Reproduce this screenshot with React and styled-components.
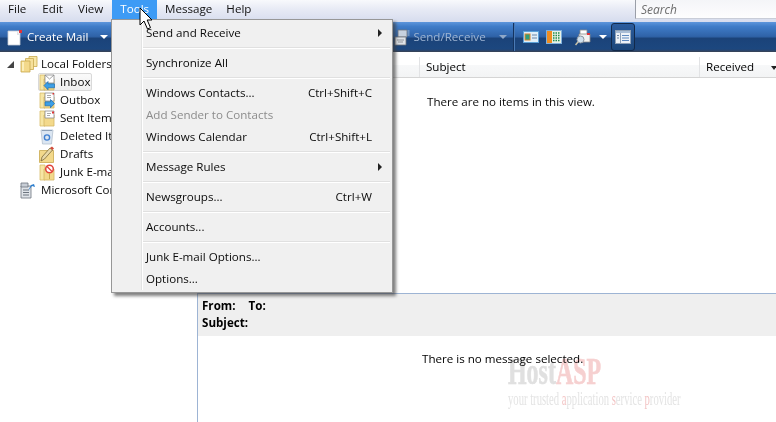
import React from 'react';
import styled, { createGlobalStyle } from 'styled-components';

const Global = createGlobalStyle`
  html, body { margin: 0; padding: 0; background: #fff; overflow: hidden; }
  * { box-sizing: border-box; }
`;
const FONT = `"Open Sans", "Noto Sans", "Liberation Sans", sans-serif`;

const Window = styled.div`
  position: relative; width: 776px; height: 422px; overflow: hidden; background: #fff;
  display: flex; flex-direction: column;
  font-family: ${FONT}; font-size: 11.6px; color: #000;
`;
const MenuBar = styled.div`
  height: 22px; flex: none; display: flex; align-items: flex-start;
  background: linear-gradient(#f8f9fc 0%, #e8ebf5 40%, #d6dcee 100%);
`;
const MenuItem = styled.div`
  height: 19px; line-height: 18px; padding: 0 8px; flex: none;
  margin-right: ${p => p.$mr || 0}px;
  background: ${p => (p.$active ? '#3d9bf5' : 'transparent')};
  color: ${p => (p.$active ? '#fff' : '#111')};
`;
const Search = styled.div`
  margin-left: auto; width: 141px; height: 19px; background: linear-gradient(#f4f5f8, #fdfdfe);
  border-left: 1px solid #9a9ea8; border-bottom: 1px solid #c9cdd8;
  font-style: italic; color: #6d6d6d; padding-left: 5px; line-height: 19px; font-size: 12px;
`;
const Toolbar = styled.div`
  height: 30px; flex: none; display: flex; align-items: center; padding-left: 7px; color: #fff;
  background: linear-gradient(#5d95dc 0%, #3f7cc8 15%, #2f63a8 48%, #1b4379 55%, #1c477f 90%, #2c4468 96%, #3c4452 100%);
`;
const ToolLabel = styled.span`
  color: ${p => (p.$dim ? '#9db4d2' : '#fff')}; margin-left: ${p => p.$ml}px; padding-bottom: 2px;
`;
const Caret = styled.span`
  width: 0; height: 0; border-left: 4px solid transparent; border-right: 4px solid transparent;
  border-top: 4px solid ${p => (p.$dim ? '#8fa8c8' : '#fff')}; margin-left: ${p => p.$ml}px; flex: none;
`;
const ToolDivider = styled.span`
  width: 1px; height: 28px; background: #14335f; box-shadow: 1px 0 0 #4a7ab5; margin: 0 9px 0 6px;
  flex: none;
`;
const ToolGap = styled.span`width: ${p => p.$w}px; flex: none;`;
const ToolIcon = styled.span`display: flex; margin-left: ${p => p.$ml || 0}px; flex: none;`;
const ToggleButton = styled.span`
  width: 24px; height: 28px; margin-left: 4px; border: 1px solid #12294a; border-radius: 3px; flex: none;
  background: linear-gradient(#2b5c9e, #1c4679); display: flex; align-items: center; justify-content: center;
`;
const Body = styled.div`flex: 1; display: flex; min-height: 0;`;
const Sidebar = styled.div`
  width: 197px; flex: none; padding-top: 3px; display: flex; flex-direction: column;
`;
const TreeRow = styled.div`
  height: 18px; display: flex; align-items: center; flex: none;
  padding-left: ${p => p.$indent}px; white-space: nowrap; color: #0a0a0a;
`;
const TreeLabel = styled.span`
  padding-bottom: 2px; margin-left: ${p => p.$ml || 0}px;
`;
const IconSlot = styled.span`
  width: 16px; margin-right: 5px; display: flex; justify-content: center; flex: none;
`;
const Selected = styled.div`
  display: flex; align-items: center; height: 18px; width: 54px; margin-left: -1px;
  border: 1px solid #d9d9d9; border-radius: 2px; background: linear-gradient(#fafafa, #efefef);
`;
const Expander = styled.span`
  width: 0; height: 0; border-left: 7px solid transparent; border-bottom: 7px solid #444; flex: none;
  margin-right: 6px;
`;
const Main = styled.div`flex: 1; display: flex; flex-direction: column; min-width: 0;`;
const ListPane = styled.div`height: 241px; flex: none; padding-top: 5px; display: flex; flex-direction: column;`;
const ColumnHeader = styled.div`
  height: 21px; flex: none; display: flex; border-bottom: 1px solid #d5d5d5;
  background: linear-gradient(#fff 0%, #fff 40%, #f7f8f9 41%, #f3f4f5 100%);
`;
const Column = styled.div`
  width: ${p => p.$w}px; flex: ${p => (p.$w ? 'none' : 1)}; padding-left: ${p => p.$pl || 0}px;
  border-right: ${p => (p.$last ? 'none' : '1px solid #e2e3e5')}; line-height: 20px;
  display: flex; align-items: center; justify-content: ${p => (p.$last ? 'space-between' : 'flex-start')};
`;
const SortCaret = styled.span`
  width: 0; height: 0; border-left: 3px solid transparent; border-right: 3px solid transparent;
  border-top: 4px solid #222; flex: none; margin-right: -1px; margin-top: 1px;
`;
const EmptyNote = styled.div`
  padding: 15px 0 0 230px; line-height: 17px; color: #0a0a0a;
`;
const Preview = styled.div`
  flex: 1; border-top: 1px solid #9db4d4; border-left: 1px solid #9db4d4; display: flex; flex-direction: column;
`;
const PreviewHeader = styled.div`
  height: 42px; flex: none; background: #efefef; padding: 3px 0 0 4px; font-weight: 700; line-height: 17px;
`;
const HeaderLine = styled.div`display: flex; gap: 13px;`;
const PreviewNote = styled.div`padding: 14px 0 0 224px; line-height: 17px;`;

const Dropdown = styled.div`
  position: absolute; left: 111px; top: 19px; width: 282px; height: 274px;
  background: #f0f0f0; border: 1px solid #979797; padding: 2px 2px 2px 30px;
  box-shadow: 3px 3px 3px rgba(60,60,60,.65); z-index: 3;
  &::before { content: ''; position: absolute; left: 29px; top: 2px; bottom: 2px; width: 1px; background: #e2e3e3; box-shadow: 1px 0 0 #fff; }
`;
const DropItem = styled.div`
  height: 22px; display: flex; align-items: center; justify-content: space-between;
  padding: 0 18px 2px 4px; color: ${p => (p.$off ? '#8c8c8c' : '#0a0a0a')}; position: relative;
`;
const Arrow = styled.span`
  position: absolute; right: 8px; top: 7px; width: 0; height: 0;
  border-top: 4px solid transparent; border-bottom: 4px solid transparent; border-left: 4px solid #222;
`;
const Sep = styled.div`
  height: 8px; display: flex; align-items: center;
  &::after { content: ''; display: block; width: 100%; height: 2px; background: linear-gradient(#e0e0e0 50%, #fff 50%); }
`;
const Watermark = styled.div`
  position: absolute; left: 508px; top: 353px; z-index: 1; pointer-events: none; user-select: none;
  font-family: "Liberation Serif", serif; color: #e0e0e0; width: 180px; mix-blend-mode: multiply;
`;
const WmTitle = styled.div`
  font-size: 38px; line-height: 36px; font-weight: 700; transform: scaleX(.63); transform-origin: left; white-space: nowrap;
  -webkit-text-stroke: .6px currentColor;
  span { color: #f6d0d0; }
`;
const WmTag = styled.div`
  font-size: 19px; line-height: 20px; transform: scaleX(.56); transform-origin: left; white-space: nowrap; color: #e4e4e4;
  span { color: #f3c6c6; }
`;
const Cursor = styled.svg`position: absolute; left: 139px; top: 7px; z-index: 5;`;

const Folder = ({ children }) => (
  <svg width="16" height="17" viewBox="0 0 16 17" style={{ flex: 'none' }}>
    <path d="M1 1h5v15H1z" fill="#f7e6a4" stroke="#d9bd6a" strokeWidth=".8" />
    <path d="M5 5h10v11H5z" fill="#f3d98b" stroke="#d3b562" strokeWidth=".8" />
    {children}
  </svg>
);
const LocalFolders = () => (
  <svg width="18" height="17" viewBox="0 0 18 17" style={{ flex: 'none' }}>
    <path d="M9 0.500h8v10H9z" fill="#f8e7a6" stroke="#c9a94f" strokeWidth=".8" />
    <path d="M5.500 2.500h8v11h-8z" fill="#f6e09a" stroke="#c9a94f" strokeWidth=".8" />
    <path d="M1 5h9v11H1z" fill="#f3d98b" stroke="#c9a94f" strokeWidth=".8" />
    <path d="M2 6v9h2V6z" fill="#fbeeb9" />
  </svg>
);
const Inbox = () => (
  <Folder>
    <path d="M6 1h9v8H6z" fill="#fff" stroke="#8a8a8a" strokeWidth=".8" />
    <path d="M6 1l4.500 4L15 1" fill="none" stroke="#8a8a8a" strokeWidth=".8" />
    <path d="M5 11.500l4-4v2.300h6.500v4H9v2z" fill="#3c9fe6" stroke="#1d6ab0" strokeWidth=".7" />
  </Folder>
);
const Outbox = () => (
  <Folder>
    <path d="M6 1h9v8H6z" fill="#fff" stroke="#8a8a8a" strokeWidth=".8" />
    <path d="M8 3.500h4M8 5.500h4" stroke="#aaa" />
    <rect x="13.500" y="1" width="1.500" height="1.500" fill="#d33" />
    <path d="M15.500 11.500l-4-4v2.300H6v4h5.500v2z" fill="#3c9fe6" stroke="#1d6ab0" strokeWidth=".7" />
  </Folder>
);
const Sent = () => (
  <Folder>
    <path d="M6 1h9v7H6z" fill="#fff" stroke="#8a8a8a" strokeWidth=".8" />
    <path d="M8 3.500h4M8 5.500h3" stroke="#aaa" />
    <rect x="13" y="1.500" width="2" height="2" fill="#d33" />
  </Folder>
);
const Deleted = () => (
  <svg width="14" height="17" viewBox="0 0 14 17" style={{ flex: 'none' }}>
    <path d="M1 2h12l-1.500 14h-9z" fill="#dbe6f2" stroke="#b4c0ce" strokeWidth=".8" />
    <path d="M2 2.500h10" stroke="#8da0b6" />
    <circle cx="7" cy="9.500" r="2.600" fill="none" stroke="#3f7fd0" strokeWidth="1.400" />
  </svg>
);
const Drafts = () => (
  <svg width="16" height="17" viewBox="0 0 16 17" style={{ flex: 'none' }}>
    <path d="M.5 4.500h14v12H.5z" fill="#f3d98b" stroke="#c9a94f" strokeWidth=".8" />
    <path d="M2 15l1-4 8-9 2.500 2-8 9z" fill="#e8d9a8" stroke="#6f5a2c" strokeWidth=".7" />
    <path d="M11 2l2-1.500 2 2-1.500 1.500z" fill="#d24a3a" />
  </svg>
);
const Junk = () => (
  <Folder>
    <circle cx="10.500" cy="5" r="3.800" fill="#fff" stroke="#e0443a" strokeWidth="1.500" />
    <path d="M8 2.500l5 5" stroke="#e0443a" strokeWidth="1.300" />
    <path d="M10.500 9v6" stroke="#c9a94f" />
  </Folder>
);
const Community = () => (
  <svg width="16" height="17" viewBox="0 0 16 17" style={{ flex: 'none' }}>
    <path d="M1 4h10v12H1z" fill="#dfe3e8" stroke="#6d757f" strokeWidth=".8" />
    <path d="M1 1h7v4H1z" fill="#c8ced6" stroke="#6d757f" strokeWidth=".8" />
    <path d="M3 8h6M3 10.500h6M3 13h6" stroke="#6d757f" />
    <path d="M8 9l4-5 3 1-1-3-3 1z" fill="#2c7fd0" />
  </svg>
);
const CreateIcon = () => (
  <svg width="16" height="17" viewBox="0 0 16 17" style={{ flex: 'none' }}>
    <path d="M1 2h9l3 0v14H1z" fill="#fff" stroke="#c5ccd6" strokeWidth=".8" />
    <path d="M10 2v4h3" fill="#dfe3e8" />
    <rect x="12" y="1" width="3" height="3" fill="#e0333a" />
  </svg>
);
const SendIcon = () => (
  <svg width="16" height="17" viewBox="0 0 16 17" style={{ flex: 'none' }} opacity=".9">
    <path d="M4 1h9v7H4z" fill="#d8dde4" stroke="#777" strokeWidth=".8" />
    <path d="M1 8h11v8H1z" fill="#f4f4f4" stroke="#777" strokeWidth=".8" />
    <path d="M3 11h7M4 13h5" stroke="#888" strokeWidth=".8" />
    <path d="M13.500 2h2M13.500 4h2M13.500 6h2" stroke="#b8c4d4" />
  </svg>
);
const ContactsIcon = () => (
  <svg width="16" height="12" viewBox="0 0 16 12">
    <rect x=".5" y=".5" width="15" height="11" fill="#dfeef9" stroke="#5aa0d8" />
    <rect x="2" y="3" width="5" height="6" fill="#2f9e7a" stroke="#d9822b" />
    <path d="M9 4h5M9 7h5" stroke="#6c86a8" />
  </svg>
);
const CalendarIcon = () => (
  <svg width="16" height="14" viewBox="0 0 16 14">
    <rect x=".5" y=".5" width="15" height="13" fill="#e8f2e6" stroke="#7fb0dc" />
    <rect x="1" y="1" width="5" height="12" fill="#ef8c20" />
    <path d="M7 3h7M7 5.500h7M7 8h7M7 10.500h7" stroke="#1f8a4c" strokeDasharray="1.500 1" strokeWidth="1.500" />
  </svg>
);
const FindIcon = () => (
  <svg width="16" height="17" viewBox="0 0 16 17">
    <path d="M5 1h7v5H5z" fill="#fff" stroke="#8a8a8a" strokeWidth=".8" />
    <path d="M4 5h11v8H4z" fill="#f2f2f2" stroke="#8a8a8a" strokeWidth=".8" />
    <rect x="12" y="4" width="3" height="2" fill="#e0333a" />
    <circle cx="5.500" cy="10.500" r="3.500" fill="#cfe0ee" stroke="#8a94a0" />
    <path d="M3 13l-2.500 3" stroke="#c9c2a8" strokeWidth="1.500" />
  </svg>
);
const LayoutIcon = () => (
  <svg width="16" height="14" viewBox="0 0 16 14">
    <rect x=".5" y=".5" width="15" height="13" fill="#eef2f8" stroke="#8ea0b6" />
    <rect x="1" y="1" width="14" height="2" fill="#a9bdd6" />
    <path d="M5.500 3v10" stroke="#8ea0b6" />
    <path d="M7 5.500h7M7 8h7M7 10.500h7" stroke="#5f8ac0" />
    <path d="M2 5.500h2M2 8h2" stroke="#6f87a6" />
  </svg>
);

const tree = [
  { label: 'Inbox', Icon: Inbox, sel: true },
  { label: 'Outbox', Icon: Outbox },
  { label: 'Sent Items', Icon: Sent },
  { label: 'Deleted Items', Icon: Deleted },
  { label: 'Drafts', Icon: Drafts },
  { label: 'Junk E-mail', Icon: Junk },
];

const menu = [
  [{ t: 'Send and Receive', sub: true }],
  [{ t: 'Synchronize All' }],
  [{ t: 'Windows Contacts...', k: 'Ctrl+Shift+C' }, { t: 'Add Sender to Contacts', off: true }, { t: 'Windows Calendar', k: 'Ctrl+Shift+L' }],
  [{ t: 'Message Rules', sub: true }],
  [{ t: 'Newsgroups...', k: 'Ctrl+W' }],
  [{ t: 'Accounts...' }],
  [{ t: 'Junk E-mail Options...' }, { t: 'Options...' }],
];

export default function App() {
  return (
    <Window>
      <Global />
      <MenuBar>
        <MenuItem>File</MenuItem>
        <MenuItem $mr={-1}>Edit</MenuItem>
        <MenuItem $mr={1}>View</MenuItem>
        <MenuItem $active>Tools</MenuItem>
        <MenuItem $mr={-2}>Message</MenuItem>
        <MenuItem>Help</MenuItem>
        <Search>Search</Search>
      </MenuBar>
      <Toolbar>
        <CreateIcon />
        <ToolLabel $ml={4}>Create Mail</ToolLabel>
        <Caret $ml={12} />
        <ToolGap $w={286} />
        <SendIcon />
        <ToolLabel $dim $ml={3}>Send/Receive</ToolLabel>
        <Caret $ml={13} $dim />
        <ToolDivider />
        <ToolIcon><ContactsIcon /></ToolIcon>
        <ToolIcon $ml={7}><CalendarIcon /></ToolIcon>
        <ToolIcon $ml={13}><FindIcon /></ToolIcon>
        <Caret $ml={8} />
        <ToggleButton><LayoutIcon /></ToggleButton>
      </Toolbar>
      <Body>
        <Sidebar>
          <TreeRow $indent={7}>
            <Expander /><LocalFolders /><TreeLabel $ml={3}>Local Folders</TreeLabel>
          </TreeRow>
          {tree.map(({ label, Icon, sel }) => (
            <TreeRow key={label} $indent={39}>
              {sel ? (
                <Selected><IconSlot><Icon /></IconSlot><TreeLabel>{label}</TreeLabel></Selected>
              ) : (
                <><IconSlot><Icon /></IconSlot><TreeLabel>{label}</TreeLabel></>
              )}
            </TreeRow>
          ))}
          <TreeRow $indent={20}>
            <IconSlot><Community /></IconSlot><TreeLabel>Microsoft Communities</TreeLabel>
          </TreeRow>
        </Sidebar>
        <Main>
          <ListPane>
            <ColumnHeader>
              <Column $w={223} />
              <Column $w={280} $pl={6}>Subject</Column>
              <Column $last $pl={6}>Received<SortCaret /></Column>
            </ColumnHeader>
            <EmptyNote>There are no items in this view.</EmptyNote>
          </ListPane>
          <Preview>
            <PreviewHeader>
              <HeaderLine><span>From:</span><span>To:</span></HeaderLine>
              <div>Subject:</div>
            </PreviewHeader>
            <PreviewNote>There is no message selected.</PreviewNote>
          </Preview>
        </Main>
      </Body>
      <Dropdown>
        {menu.map((group, i) => (
          <React.Fragment key={i}>
            {i > 0 && <Sep />}
            {group.map(it => (
              <DropItem key={it.t} $off={it.off}>
                <span>{it.t}</span>
                {it.k && <span>{it.k}</span>}
                {it.sub && <Arrow />}
              </DropItem>
            ))}
          </React.Fragment>
        ))}
      </Dropdown>
      <Watermark>
        <WmTitle>Host<span>ASP</span></WmTitle>
        <WmTag>your trusted <span>a</span>pplication <span>s</span>ervice <span>p</span>rovider</WmTag>
      </Watermark>
      <Cursor width="14" height="24" viewBox="0 0 14 24">
        <path d="M1 1v17l4-4 3.500 8 3-1.300-3.300-7.700H13z" fill="#fff" stroke="#000" strokeWidth="1" strokeLinejoin="round" />
      </Cursor>
    </Window>
  );
}
